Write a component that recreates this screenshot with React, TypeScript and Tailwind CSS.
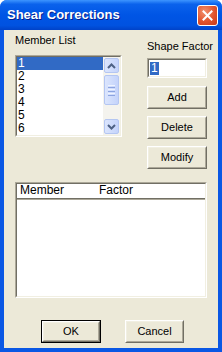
import React from "react";

const sunkenOuter =
  "border border-t-[#aca899] border-l-[#aca899] border-r-white border-b-white";
const sunkenInner =
  "border border-t-[#716f64] border-l-[#716f64] border-r-[#f1efe2] border-b-[#f1efe2]";

function XpButton({ label, def = false, width = "w-[60px]" }: { label: string; def?: boolean; width?: string }) {
  const face = (
    <div className="h-full border border-t-white border-l-white border-r-[#716f64] border-b-[#716f64]">
      <div className="h-full flex items-center justify-center border border-t-[#f1efe2] border-l-[#f1efe2] border-r-[#aca899] border-b-[#aca899] bg-[#ece9d8] text-[11px] text-black">
        {label}
      </div>
    </div>
  );
  if (def) {
    return <div className={`${width} h-[23px] border border-black`}>{face}</div>;
  }
  return <div className={`${width} h-[23px]`}>{face}</div>;
}

function Arrow({ up }: { up?: boolean }) {
  return (
    <svg width="9" height="6" viewBox="0 0 9 6">
      <path
        d={up ? "M1 5 L4.5 1.5 L8 5" : "M1 1 L4.5 4.5 L8 1"}
        fill="none"
        stroke="#4d6185"
        strokeWidth="2"
      />
    </svg>
  );
}

function ScrollBtn({ children, h = "h-[17px]" }: { children?: React.ReactNode; h?: string }) {
  return (
    <div className={`w-[17px] ${h} p-[1px] bg-[#f4f3ee]`}>
      <div className="w-full h-full rounded-[2px] border border-[#b4c6f2] bg-[linear-gradient(to_right,#dbe5fd,#c4d3fb)] flex flex-col items-center justify-center gap-[1px]">
        {children}
      </div>
    </div>
  );
}

export default function App() {
  const items = ["1", "2", "3", "4", "5", "6"];

  return (
    <div className="w-[222px] h-[352px] flex flex-col bg-[#0a57e4] rounded-t-[7px] overflow-hidden font-['Liberation_Sans',Arial,sans-serif] select-none">
      {/* Title bar */}
      <div className="h-[30px] shrink-0 flex items-center justify-between pl-[7px] pr-[4px] bg-[linear-gradient(to_bottom,#3d95ff_0%,#0a62ec_14%,#0055e5_50%,#0052e0_85%,#0042c8_100%)]">
        <span className="text-[13px] font-bold text-white [text-shadow:1px_1px_0_#0a1e8a]">
          Shear Corrections
        </span>
        <div className="w-[21px] h-[21px] rounded-[3px] border border-white bg-[radial-gradient(circle_at_35%_30%,#f2916f,#e1532c_55%,#c8391a)] flex items-center justify-center">
          <svg width="11" height="11" viewBox="0 0 11 11">
            <path d="M1.5 1.5 L9.5 9.5 M9.5 1.5 L1.5 9.5" stroke="white" strokeWidth="2" strokeLinecap="square" />
          </svg>
        </div>
      </div>

      {/* Client area */}
      <div className="flex-1 mx-[4px] mb-[4px] bg-[#ece9d8] flex flex-col text-[11px] text-black">
        <div className="flex pl-[11px] gap-[25px]">
          {/* Member list */}
          <div className="w-[107px] flex flex-col">
            <div className="mt-[4px] h-[13px] leading-[13px]">Member List</div>
            <div className={`mt-[8px] h-[82px] ${sunkenOuter}`}>
              <div className={`h-full ${sunkenInner} bg-white flex`}>
                <div className="flex-1 flex flex-col text-[12px]">
                  {items.map((it, i) => (
                    <div
                      key={it}
                      className={`h-[13px] leading-[13px] pl-[1px] ${i === 0 ? "bg-[#316ac5] text-white" : ""}`}
                    >
                      {it}
                    </div>
                  ))}
                </div>
                <div className="w-[17px] flex flex-col bg-[#f4f3ee]">
                  <ScrollBtn>
                    <Arrow up />
                  </ScrollBtn>
                  <ScrollBtn h="h-[32px]">
                    <div className="w-[7px] h-[1px] bg-[#eef3ff]" />
                    <div className="w-[7px] h-[1px] bg-[#8ca4e0]" />
                    <div className="w-[7px] h-[1px] bg-[#eef3ff]" />
                    <div className="w-[7px] h-[1px] bg-[#8ca4e0]" />
                    <div className="w-[7px] h-[1px] bg-[#eef3ff]" />
                    <div className="w-[7px] h-[1px] bg-[#8ca4e0]" />
                  </ScrollBtn>
                  <div className="flex-1" />
                  <ScrollBtn>
                    <Arrow />
                  </ScrollBtn>
                </div>
              </div>
            </div>
          </div>

          {/* Shape factor + buttons */}
          <div className="w-[60px] flex flex-col">
            <div className="mt-[10px] h-[13px] leading-[13px] whitespace-nowrap">Shape Factor</div>
            <div className={`mt-[5px] h-[20px] ${sunkenOuter}`}>
              <div className={`h-full ${sunkenInner} bg-white flex items-center pl-[1px]`}>
                <span className="bg-[#316ac5] text-white leading-[13px] px-[1px] text-[12px]">1</span>
              </div>
            </div>
            <div className="mt-[8px] flex flex-col gap-[7px]">
              <XpButton label="Add" />
              <XpButton label="Delete" />
              <XpButton label="Modify" />
            </div>
          </div>
        </div>

        {/* List view */}
        <div className={`mt-[13px] ml-[11px] w-[192px] h-[116px] ${sunkenOuter}`}>
          <div className={`h-full ${sunkenInner} bg-white flex flex-col`}>
            <div className="h-[15px] flex border-b border-b-[#716f64] shadow-[0_1px_0_#aca899] text-[12px] leading-[13px]">
              <div className="w-[82px] pl-[3px]">Member</div>
              <div>Factor</div>
            </div>
          </div>
        </div>

        {/* Bottom buttons */}
        <div className="mt-[22px] flex pl-[37px] gap-[24px]">
          <XpButton label="OK" def />
          <XpButton label="Cancel" width="w-[59px]" />
        </div>
      </div>
    </div>
  );
}
